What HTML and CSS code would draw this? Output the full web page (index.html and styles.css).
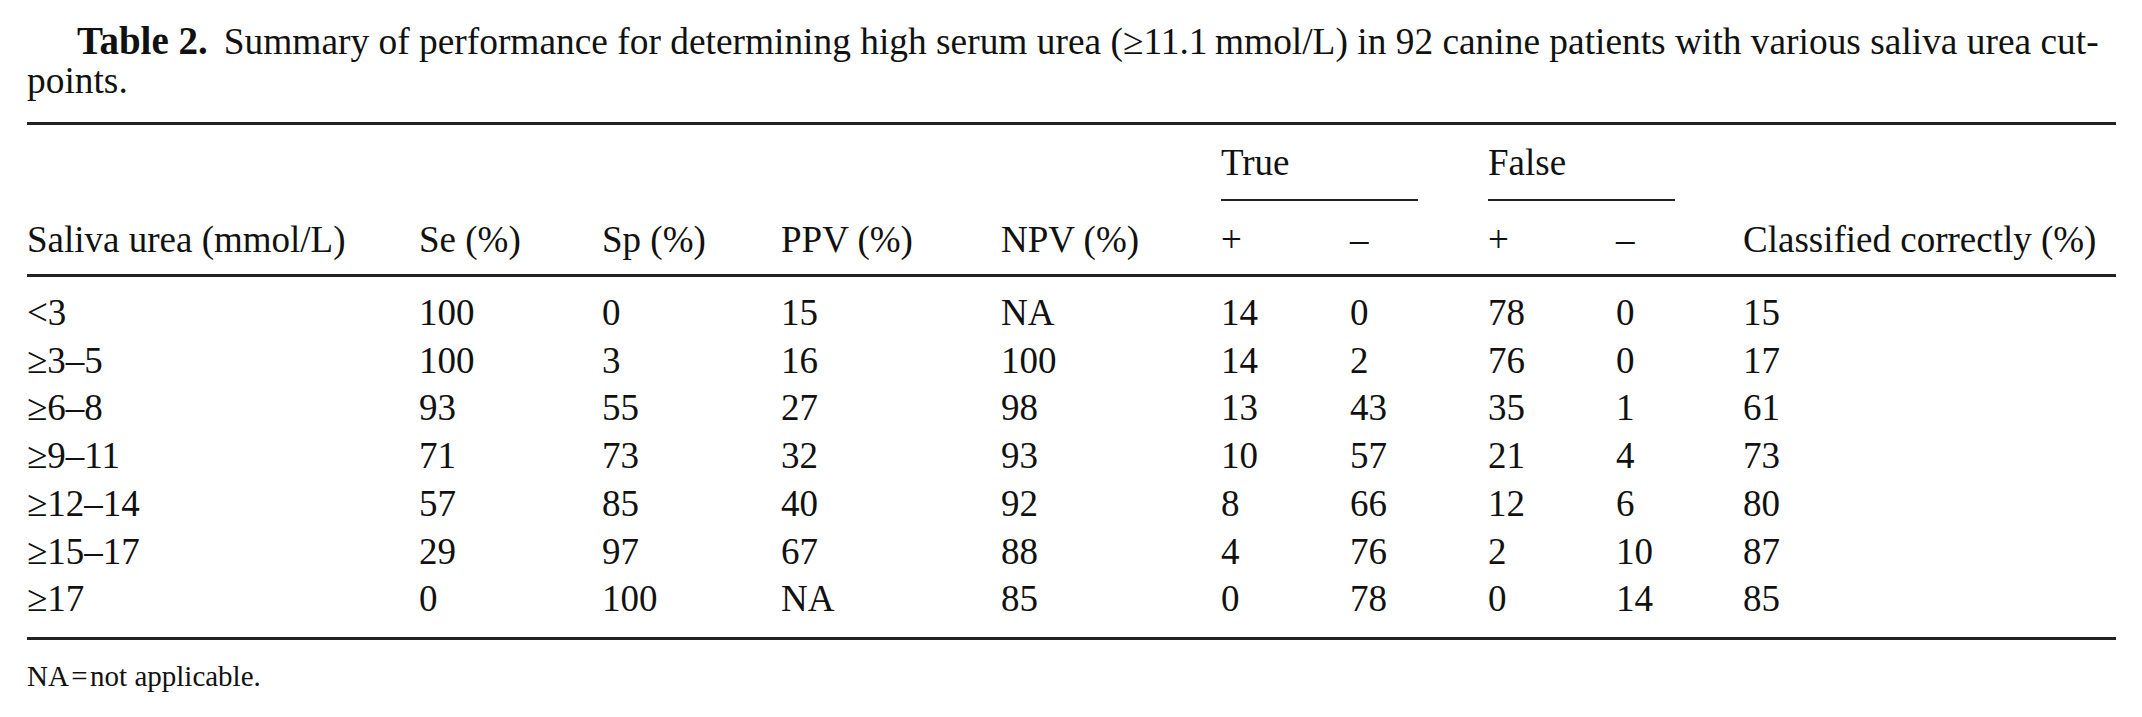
FILE: index.html
```html
<!DOCTYPE html>
<html lang="en">
<head>
<meta charset="utf-8">
<title>Table 2</title>
<link rel="stylesheet" href="styles.css">
</head>
<body>
<div class="page">
  <p class="caption"><span class="label">Table 2.</span>Summary of performance for determining high serum urea (&ge;11.1&thinsp;mmol/L) in 92 canine patients with various saliva urea cut-<br>points.</p>
  <table class="data">
    <colgroup>
      <col class="c1"><col class="c2"><col class="c3"><col class="c4"><col class="c5">
      <col class="c6"><col class="c7"><col class="c8"><col class="c9"><col class="c10">
    </colgroup>
    <thead>
      <tr class="group">
        <th></th><th></th><th></th><th></th><th></th>
        <th colspan="2"><div class="span-label true">True</div></th>
        <th colspan="2"><div class="span-label false">False</div></th>
        <th></th>
      </tr>
      <tr class="heads">
        <th>Saliva urea (mmol/L)</th>
        <th>Se (%)</th>
        <th>Sp (%)</th>
        <th>PPV (%)</th>
        <th>NPV (%)</th>
        <th>+</th>
        <th>&ndash;</th>
        <th>+</th>
        <th>&ndash;</th>
        <th>Classified correctly (%)</th>
      </tr>
    </thead>
    <tbody>
      <tr class="first"><td>&lt;3</td><td>100</td><td>0</td><td>15</td><td>NA</td><td>14</td><td>0</td><td>78</td><td>0</td><td>15</td></tr>
      <tr><td>&ge;3&ndash;5</td><td>100</td><td>3</td><td>16</td><td>100</td><td>14</td><td>2</td><td>76</td><td>0</td><td>17</td></tr>
      <tr><td>&ge;6&ndash;8</td><td>93</td><td>55</td><td>27</td><td>98</td><td>13</td><td>43</td><td>35</td><td>1</td><td>61</td></tr>
      <tr><td>&ge;9&ndash;11</td><td>71</td><td>73</td><td>32</td><td>93</td><td>10</td><td>57</td><td>21</td><td>4</td><td>73</td></tr>
      <tr><td>&ge;12&ndash;14</td><td>57</td><td>85</td><td>40</td><td>92</td><td>8</td><td>66</td><td>12</td><td>6</td><td>80</td></tr>
      <tr><td>&ge;15&ndash;17</td><td>29</td><td>97</td><td>67</td><td>88</td><td>4</td><td>76</td><td>2</td><td>10</td><td>87</td></tr>
      <tr class="last"><td>&ge;17</td><td>0</td><td>100</td><td>NA</td><td>85</td><td>0</td><td>78</td><td>0</td><td>14</td><td>85</td></tr>
    </tbody>
  </table>
  <p class="note">NA&#8202;=&#8202;not applicable.</p>
</div>
</body>
</html>
```
FILE: styles.css
```css
html, body {
  margin: 0;
  padding: 0;
  background: #ffffff;
}

body {
  font-family: "Liberation Serif", "Times New Roman", serif;
  color: #111111;
}

.page {
  padding: 0 26px 0 27px;
}

.caption {
  margin: 0;
  padding-top: 21px;
  font-size: 37.4px;
  line-height: 39px;
  text-indent: 50px;
}

.caption .label {
  font-weight: bold;
  font-size: 39px;
  margin-right: 16px;
}

.data {
  width: 2089px;
  margin-top: 22px;
  border-collapse: collapse;
  table-layout: fixed;
  font-size: 37px;
  border-top: 3px solid #222222;
  border-bottom: 3px solid #222222;
}

.c1 { width: 392px; }
.c2 { width: 183px; }
.c3 { width: 179px; }
.c4 { width: 220px; }
.c5 { width: 220px; }
.c6 { width: 129px; }
.c7 { width: 138px; }
.c8 { width: 128px; }
.c9 { width: 127px; }
.c10 { width: 373px; }

.data th,
.data td {
  padding: 0;
  text-align: left;
  font-weight: normal;
  vertical-align: top;
  white-space: nowrap;
}

.group th {
  padding-top: 18px;
  line-height: 40px;
}

.span-label {
  padding-bottom: 16px;
  border-bottom: 2px solid #222222;
}

.span-label.true { width: 197px; }
.span-label.false { width: 187px; }

.heads th {
  padding-top: 19px;
  padding-bottom: 14px;
  line-height: 40px;
  border-bottom: 3px solid #222222;
}

.data td {
  line-height: 47.7px;
  height: 47.7px;
}

.data tr.first td {
  padding-top: 12px;
}

.data tr.last td {
  padding-bottom: 14px;
}

.note {
  margin: 0;
  padding-top: 19px;
  font-size: 29px;
  line-height: 34px;
}
```
